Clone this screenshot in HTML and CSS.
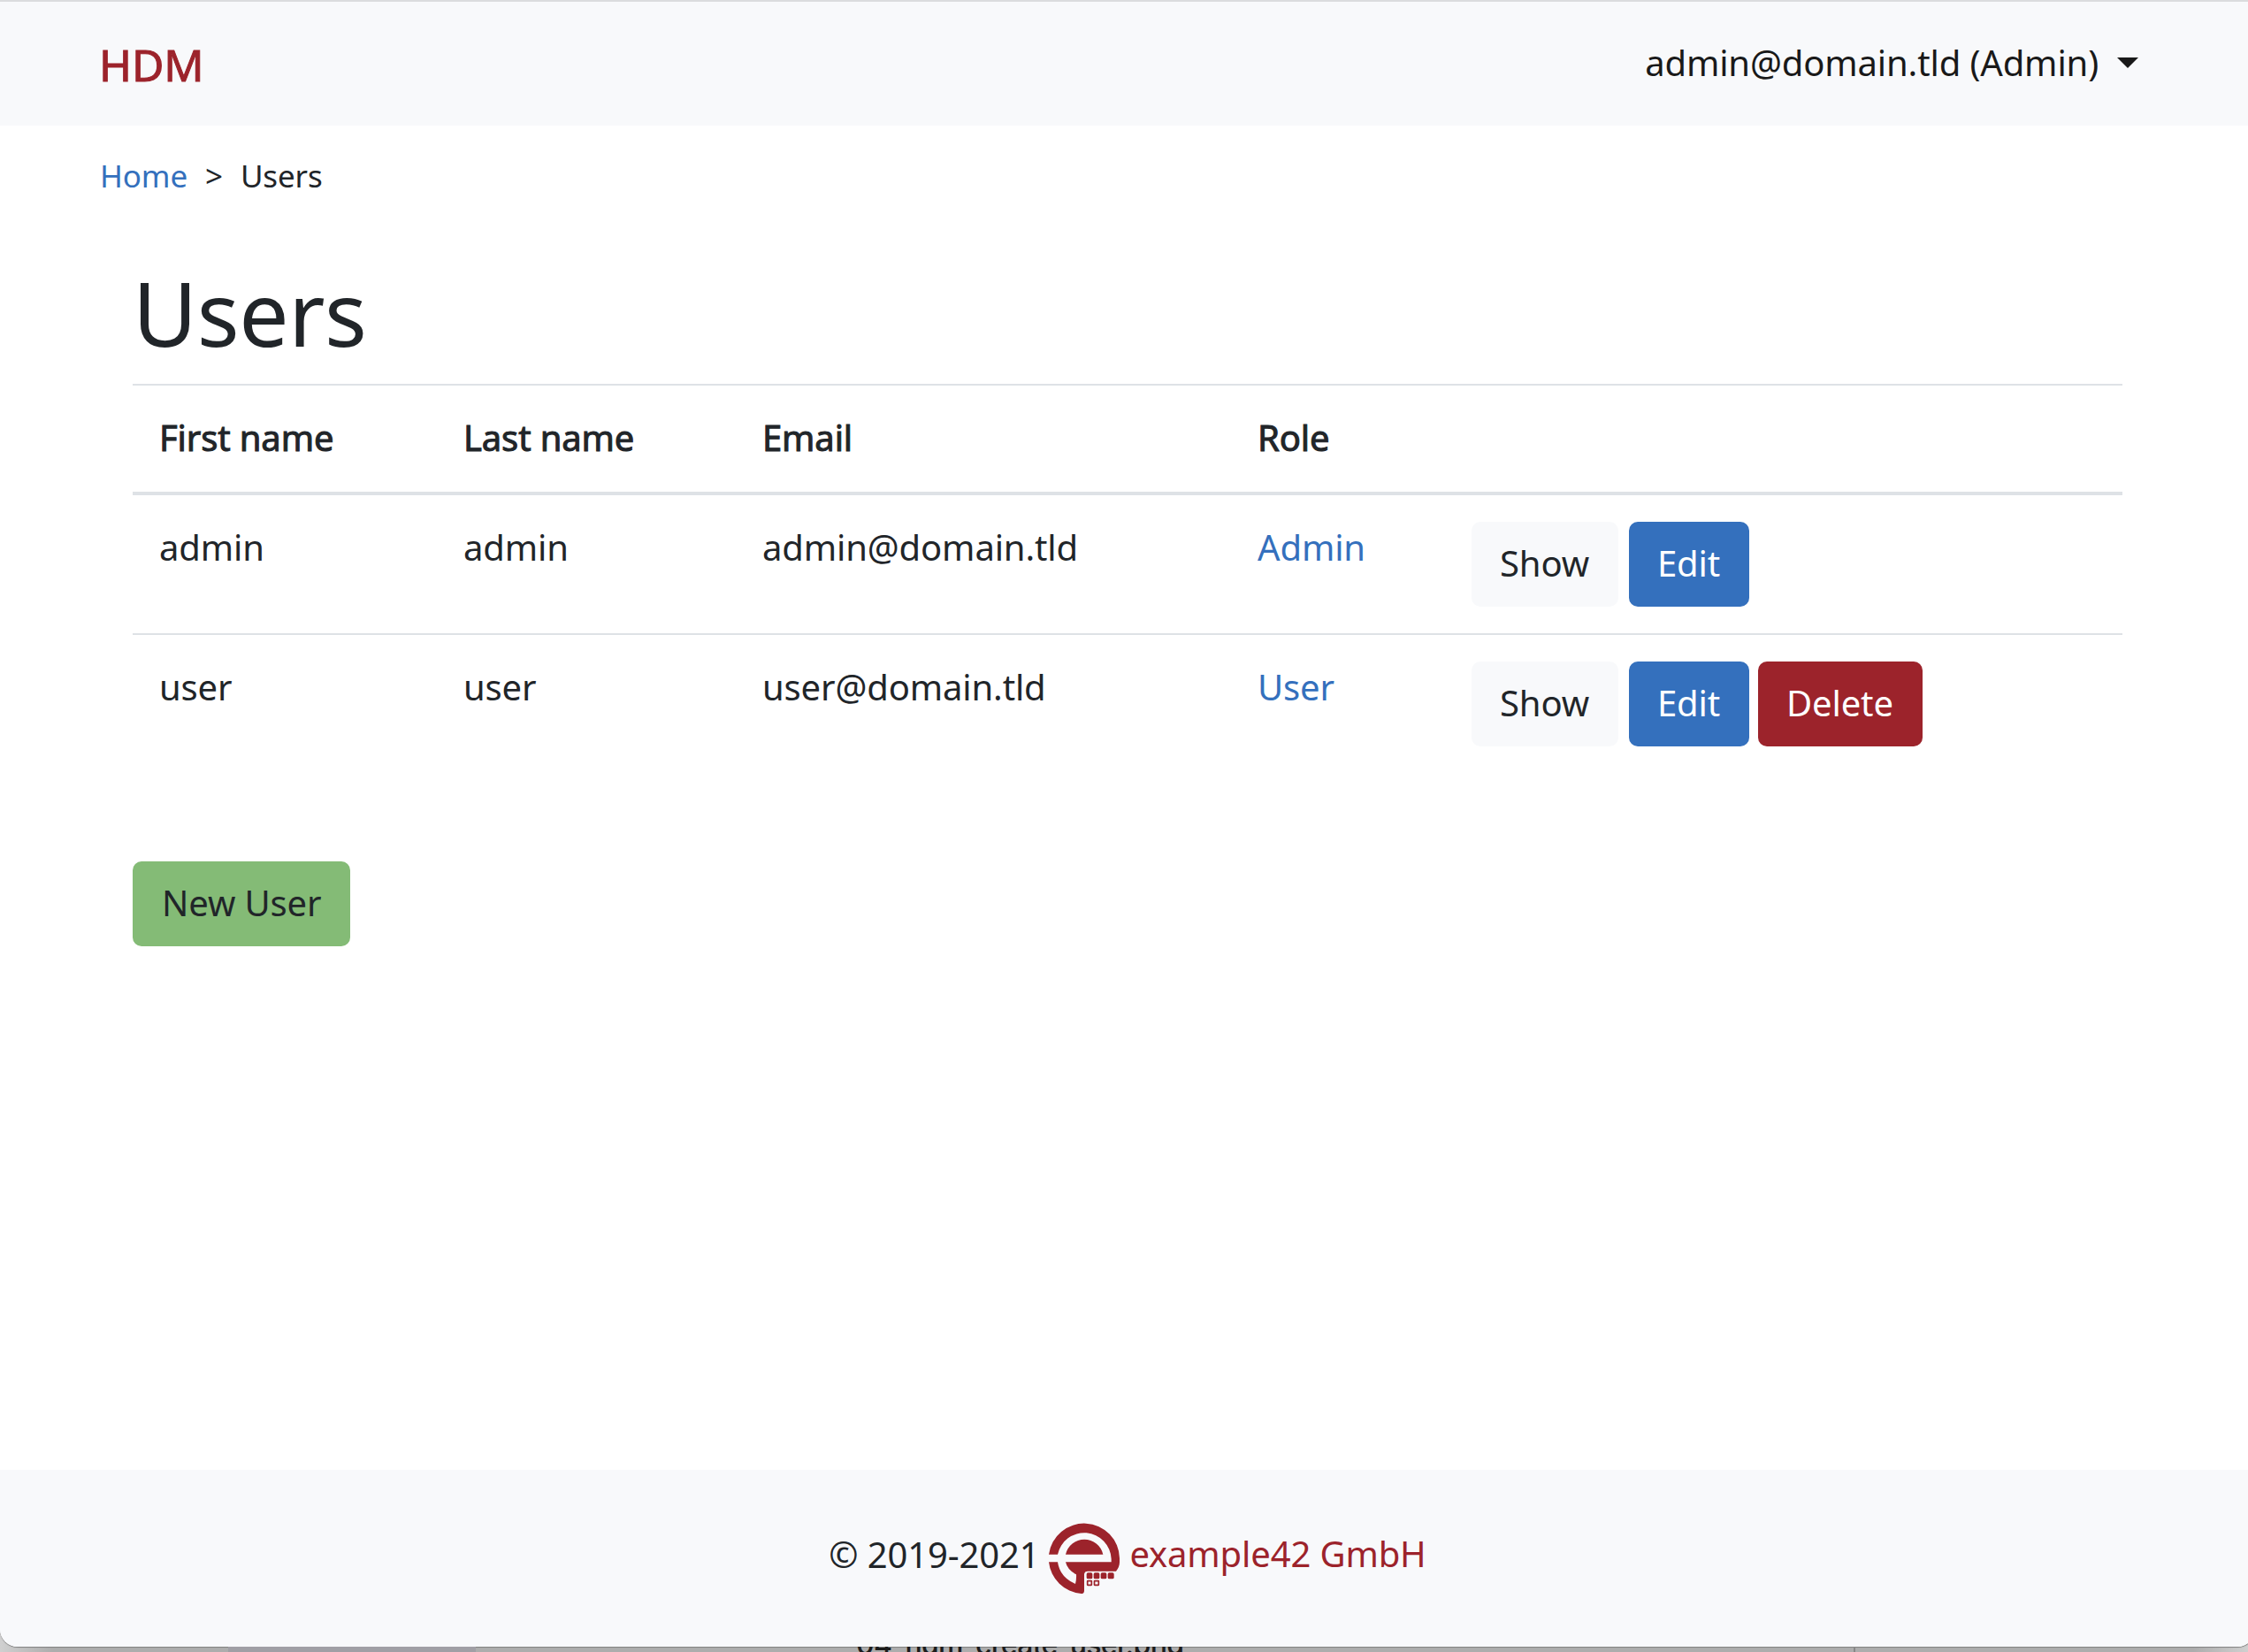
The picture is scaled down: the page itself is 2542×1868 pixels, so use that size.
FILE: index.html
```html
<!DOCTYPE html>
<html lang="en">
<head>
<meta charset="utf-8">
<title>HDM</title>
<link rel="stylesheet" href="styles.css">
</head>
<body>
<div class="window">
  <header class="navbar">
    <a class="brand">HDM</a>
    <a class="account">admin@domain.tld (Admin) <span class="caret"></span></a>
  </header>
  <nav class="breadcrumb"><a class="link">Home</a><span class="sep">&gt;</span><span>Users</span></nav>
  <main class="content">
    <h1 class="title">Users</h1>
    <table class="table">
      <colgroup><col class="c1"><col class="c2"><col class="c3"><col class="c4"><col></colgroup>
      <thead>
        <tr><th>First name</th><th>Last name</th><th>Email</th><th>Role</th><th></th></tr>
      </thead>
      <tbody>
        <tr>
          <td>admin</td><td>admin</td><td>admin@domain.tld</td><td><a class="link">Admin</a></td>
          <td><div class="actions"><a class="btn light">Show</a><a class="btn primary">Edit</a></div></td>
        </tr>
        <tr>
          <td>user</td><td>user</td><td>user@domain.tld</td><td><a class="link">User</a></td>
          <td><div class="actions"><a class="btn light">Show</a><a class="btn primary">Edit</a><a class="btn danger">Delete</a></div></td>
        </tr>
      </tbody>
    </table>
    <a class="btn success">New User</a>
  </main>
  <footer class="footer">
    <span class="copyright">© 2019-2021</span>
    <svg class="logo" viewBox="78 66 240 240">
      <path fill="#9c232b" d="M78 173A120.500 120.500 0 0 1 318 186V199Q318 216 306 230H210Q198 230 198 242V296Q198 306 188 306A120 120 0 0 1 78 199Z"/>
      <path fill="#f8f9fb" d="M76 173H108A92 92 0 0 1 290 188V199H135Q141 226 171 241Q172 258 168 273Q116 251 108 199H76Z"/>
      <path fill="#9c232b" d="M135 173A65 65 0 0 1 262 173Z"/>
      <g fill="#9c232b"><rect x="206" y="235" width="20" height="21" rx="5"/><rect x="230" y="235" width="20" height="21" rx="5"/><rect x="254" y="235" width="20" height="21" rx="5"/><rect x="278" y="235" width="21" height="21" rx="5"/></g>
      <g fill="none" stroke="#9c232b" stroke-width="5"><rect x="209" y="263" width="14" height="14" rx="1"/><rect x="232.500" y="263" width="14.500" height="14" rx="1"/></g>
    </svg>
    <a class="company">example42 GmbH</a>
  </footer>
</div>
<div class="desktop"><div class="pane"></div><div class="list"></div><div class="file">04_hdm_create_user.png</div><div class="rest"></div></div>
</body>
</html>
```
FILE: styles.css
```css
* { box-sizing: border-box; }
body {
  margin: 0;
  height: 1868px;
  overflow: hidden;
  background: linear-gradient(90deg, #d0d0d0, #adadad 60px, #adadad 2480px, #d0d0d0);
  color: #212529;
  font: 40px/60px "Noto Sans", sans-serif;
  letter-spacing: -0.14px;
}
.window {
  display: flex;
  flex-direction: column;
  width: 2550px;
  height: 1862px;
  background: #fff;
  border-radius: 0 0 20px 20px;
  overflow: hidden;
  box-shadow: 0 1px 1px #808080;
}
.navbar {
  display: flex;
  justify-content: space-between;
  align-items: flex-start;
  height: 142px;
  padding: 34px 132px 0 112px;
  border-top: 2px solid #dbdcde;
  background: #f8f9fb;
}
.brand {
  color: #9c232b;
  font-size: 50px;
  line-height: 75px;
  -webkit-text-stroke: 1px #9c232b;
}
.account {
  display: flex;
  align-items: center;
  gap: 21px;
  margin-top: 5px;
  color: #191919;
}
.caret {
  border: 12px solid transparent;
  border-top-color: #191919;
  border-bottom: 0;
}
.breadcrumb {
  display: flex;
  gap: 20px;
  margin: 30px 112px 0 113px;
  font-size: 35px;
  line-height: 54px;
}
.link { color: #3470bd; }
.content { flex: 1; padding: 67px 150px 0; }
.title {
  margin: 0 0 21px;
  font-size: 100px;
  font-weight: 400;
  line-height: 120px;
  letter-spacing: -0.4px;
}
.table {
  width: 2250px;
  table-layout: fixed;
  border-spacing: 0;
}
.c1 { width: 344px; }
.c2 { width: 338px; }
.c3 { width: 560px; }
.c4 { width: 242px; }
th, td {
  padding: 29px 30px 31px;
  text-align: left;
  vertical-align: top;
}
th {
  border-top: 2px solid #dee2e6;
  border-bottom: 4px solid #dee2e6;
  font-weight: 400;
  -webkit-text-stroke: 1px #212529;
  height: 126px;
}
tr + tr td { border-top: 2px solid #dee2e6; }
.actions {
  display: flex;
  gap: 10px;
  padding-top: 1px;
  margin-bottom: -1px;
}
.btn {
  display: block;
  height: 96px;
  padding: 17px 32px;
  border-radius: 10px;
}
.light { width: 166px; margin-right: 2px; background: #f8f9fb; }
.primary { width: 136px; background: #3470bd; color: #fff; }
.danger { width: 186px; background: #9c232b; color: #fff; }
.success {
  width: 246px;
  margin-top: 100px;
  padding-left: 33px;
  background: #84bb76;
}
.footer {
  display: flex;
  justify-content: center;
  align-items: center;
  gap: 11px;
  height: 200px;
  background: #f8f9fb;
}
.logo { width: 80px; height: 80px; }
.copyright { padding-bottom: 9px; }
.company { padding-bottom: 10px; color: #9c232b; }
.desktop {
  display: flex;
  height: 6px;
  overflow: hidden;
}
.pane { width: 258px; }
.list { width: 280px; background: #a09fa5; }
.file {
  width: 1560px;
  padding-left: 430px;
  border-right: 2px solid #888;
  color: #1c1c1c;
  font: 500 32px/36px Inter, sans-serif;
  letter-spacing: -0.7px;
  margin-top: -20px;
}
```
